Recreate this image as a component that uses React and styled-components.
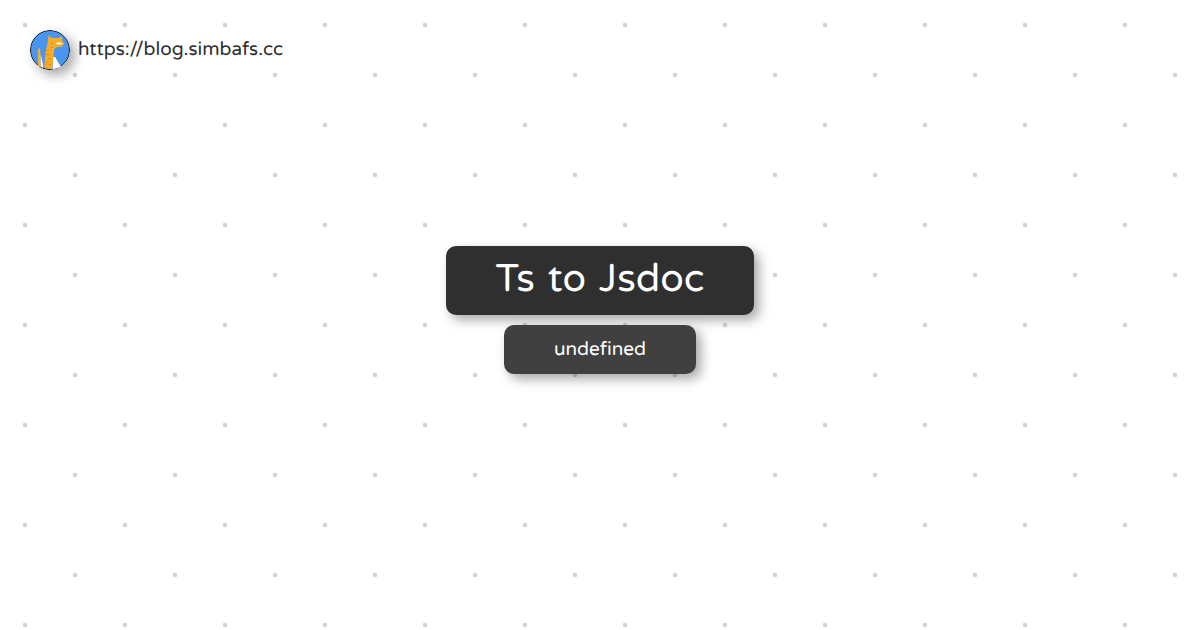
import React from 'react';
import styled, { createGlobalStyle } from 'styled-components';

const Global = createGlobalStyle`
  html, body { margin: 0; padding: 0; background: #fff; }
  body {
    font-family: "Varela Round", "Nunito", "Lato", sans-serif;
    text-rendering: geometricPrecision;
    font-variant-ligatures: none;
  }
`;

const Page = styled.div`
  width: 1200px;
  height: 630px;
  overflow: hidden;
  box-sizing: border-box;
  padding-top: 30px;
  background-color: #fff;
  background-image:
    radial-gradient(circle at 25px 25px, #d3d3d3 1.9px, transparent 2.7px),
    radial-gradient(circle at 75px 75px, #d3d3d3 1.9px, transparent 2.7px);
  background-size: 100px 100px;
`;

const Header = styled.header`
  display: flex;
  align-items: center;
  gap: 8px;
  height: 40px;
  padding-left: 30px;
`;

const Avatar = styled.svg`
  width: 40px;
  height: 40px;
  border-radius: 50%;
  box-shadow: 5px 5px 12px rgba(0, 0, 0, 0.35);
  flex: none;
`;

const SiteUrl = styled.span`
  font-size: 18.9px;
  line-height: 40px;
  color: #2d2d2d;
`;

const Main = styled.main`
  display: flex;
  flex-direction: column;
  align-items: center;
  gap: 10px;
  padding-top: 176px;
`;

const Title = styled.h1`
  margin: 0;
  width: 308px;
  height: 69px;
  box-sizing: border-box;
  padding-bottom: 3px;
  display: flex;
  align-items: center;
  justify-content: center;
  border-radius: 10px;
  background: #2f2f2f;
  color: #fff;
  font-size: 38.8px;
  font-weight: 400;
  word-spacing: 3px;
  box-shadow: 5px 5px 12px rgba(0, 0, 0, 0.35);
`;

const Subtitle = styled.div`
  width: 192px;
  height: 49px;
  display: flex;
  align-items: center;
  justify-content: center;
  border-radius: 10px;
  background: #404040;
  color: #fff;
  font-size: 19px;
  box-shadow: 5px 5px 12px rgba(0, 0, 0, 0.35);
`;

const Logo = () => (
  <Avatar viewBox="0 0 40 40">
    <circle cx="20" cy="20" r="19.5" fill="#4a95f0" stroke="#111" strokeWidth="1" />
    <path d="M14.3 38 L15 26 L16.7 17 L17.7 12 L18.7 5.3 L21.5 8 L28.5 8 L31.7 6 L32 10 L34.3 14 L32 16.5 L26 17.5 L24.3 19.3 L23.3 28 L22 39.5 Z" fill="#f9ab25" />
    <path d="M23.3 27 L25 27 L31 37 L22.5 39.4 L23 33 Z" fill="#fff" />
    <path d="M10 17.7 L7.7 20 L8 36 L10.5 37 L10.4 23 Z" fill="#f9ab25" />
    <path d="M10.7 24.3 L13.3 36 L13 38 L10.7 36.5 Z" fill="#fff" />
    <path d="M17 20 h2 v1 h-2z M16 24 h3 v1 h-3z M18 28 h3 v1 h-3z M16 32 h2 v1 h-2z M19 34 h2 v1 h-2z M20 13 h3 v1 h-3z M21 17 h2 v1 h-2z" fill="#e48a14" />
    <ellipse cx="29" cy="13.5" rx="3" ry="1.1" fill="#fff" />
  </Avatar>
);

export default function App() {
  return (
    <Page>
      <Global />
      <Header>
        <Logo />
        <SiteUrl>https://blog.simbafs.cc</SiteUrl>
      </Header>
      <Main>
        <Title>Ts to Jsdoc</Title>
        <Subtitle>undefined</Subtitle>
      </Main>
    </Page>
  );
}
